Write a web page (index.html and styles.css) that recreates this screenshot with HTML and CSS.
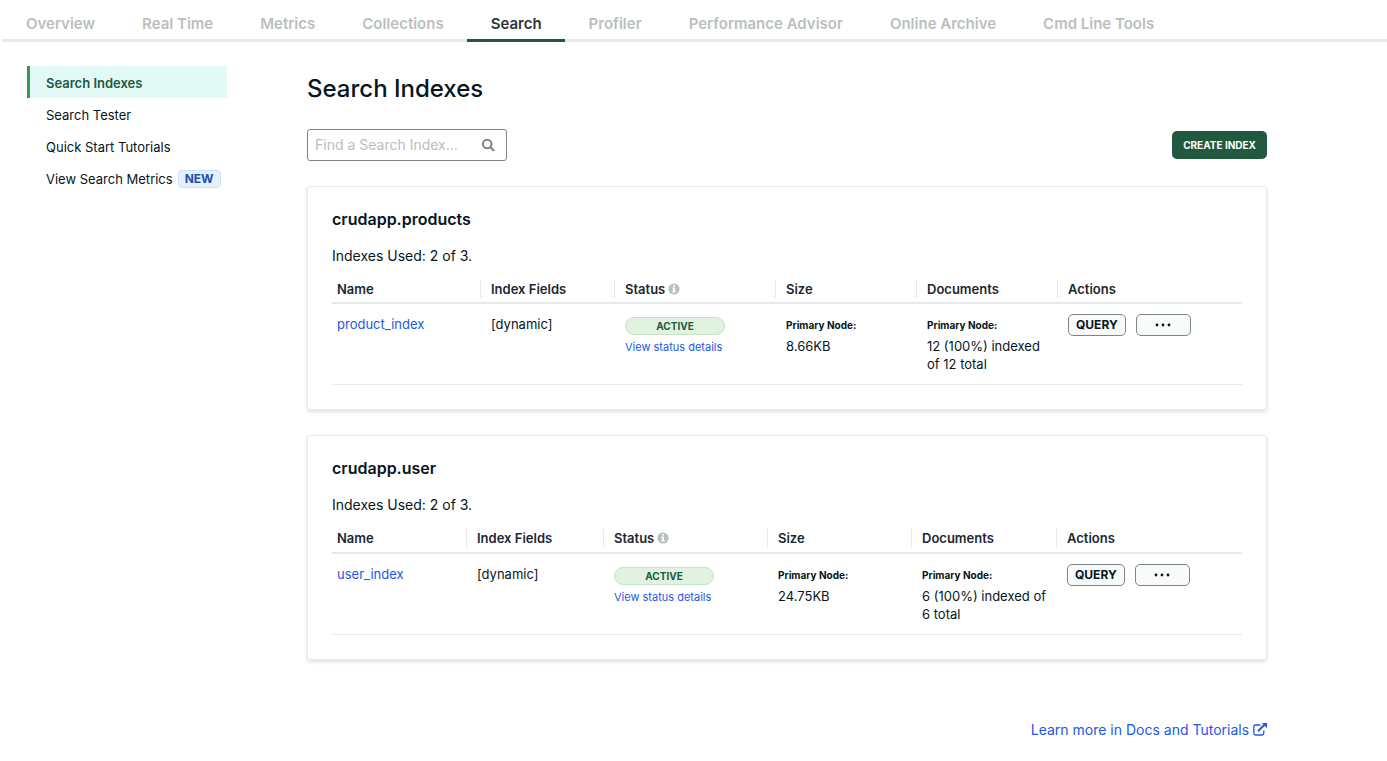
FILE: index.html
```html
<!DOCTYPE html>
<html lang="en">
<head>
<meta charset="utf-8">
<meta name="viewport" content="width=device-width, initial-scale=1">
<title>Search Indexes</title>
<link rel="stylesheet" href="styles.css">
</head>
<body>
<svg class="sprite" aria-hidden="true">
  <symbol id="info" viewBox="0 0 12 12"><circle cx="6" cy="6" r="5.6" fill="#b8c0be"/><path fill="#fff" d="M5 2h2v1.6H5zM4.2 4.6H7v3.6h.9v1.2H4.2V8.2H5V5.8h-.8z"/></symbol>
</svg>
<nav class="tabs" aria-label="Cluster">
  <a class="tab" href="#">Overview</a>
  <a class="tab" href="#">Real Time</a>
  <a class="tab" href="#">Metrics</a>
  <a class="tab" href="#">Collections</a>
  <a class="tab tab-active" href="#" aria-current="page">Search</a>
  <a class="tab" href="#">Profiler</a>
  <a class="tab" href="#">Performance Advisor</a>
  <a class="tab" href="#">Online Archive</a>
  <a class="tab" href="#">Cmd Line Tools</a>
</nav>
<div class="layout">
  <nav class="side" aria-label="Search">
    <a class="side-item side-active" href="#" aria-current="page">Search Indexes</a>
    <a class="side-item" href="#">Search Tester</a>
    <a class="side-item" href="#">Quick Start Tutorials</a>
    <a class="side-item" href="#">View Search Metrics <span class="badge">NEW</span></a>
  </nav>
  <main class="main">
    <h1 class="title">Search Indexes</h1>
    <div class="toolbar">
      <div class="search">
        <input class="search-input" type="text" placeholder="Find a Search Index..." aria-label="Find a Search Index">
        <svg class="search-icon" viewBox="0 0 14 14" aria-hidden="true"><circle cx="6.2" cy="6" r="4.3" fill="none" stroke="#7b868b" stroke-width="2"/><path d="M9.5 9.3l3 3" stroke="#7b868b" stroke-width="2.2" stroke-linecap="round"/></svg>
      </div>
      <button class="create" type="button">CREATE INDEX</button>
    </div>

    <section class="card">
      <h2 class="card-title">crudapp.products</h2>
      <p class="usage">Indexes Used: 2 of 3.</p>
      <table class="table products">
        <colgroup><col class="c-name"><col class="c-fields"><col class="c-status"><col class="c-size"><col class="c-docs"><col></colgroup>
        <thead>
          <tr>
            <th><span class="head">Name</span></th>
            <th><span class="head">Index Fields</span></th>
            <th><span class="head">Status <svg class="info"><use href="#info"/></svg></span></th>
            <th><span class="head">Size</span></th>
            <th><span class="head">Documents</span></th>
            <th><span class="head">Actions</span></th>
          </tr>
        </thead>
        <tbody>
          <tr>
            <td><a class="link" href="#">product_index</a></td>
            <td>[dynamic]</td>
            <td><span class="status">ACTIVE</span><a class="details" href="#">View status details</a></td>
            <td><strong class="node">Primary Node:</strong>8.66KB</td>
            <td><strong class="node">Primary Node:</strong>12 (100%) indexed<br>of 12 total</td>
            <td><div class="actions"><button class="btn" type="button">QUERY</button><button class="btn btn-more" type="button" aria-label="More actions"><svg class="dots" viewBox="0 0 16 4"><circle cx="2" cy="2" r="1.4"/><circle cx="8" cy="2" r="1.4"/><circle cx="14" cy="2" r="1.4"/></svg></button></div></td>
          </tr>
        </tbody>
      </table>
    </section>

    <section class="card">
      <h2 class="card-title">crudapp.user</h2>
      <p class="usage">Indexes Used: 2 of 3.</p>
      <table class="table users">
        <colgroup><col class="c-name"><col class="c-fields"><col class="c-status"><col class="c-size"><col class="c-docs"><col></colgroup>
        <thead>
          <tr>
            <th><span class="head">Name</span></th>
            <th><span class="head">Index Fields</span></th>
            <th><span class="head">Status <svg class="info"><use href="#info"/></svg></span></th>
            <th><span class="head">Size</span></th>
            <th><span class="head">Documents</span></th>
            <th><span class="head">Actions</span></th>
          </tr>
        </thead>
        <tbody>
          <tr>
            <td><a class="link" href="#">user_index</a></td>
            <td>[dynamic]</td>
            <td><span class="status">ACTIVE</span><a class="details" href="#">View status details</a></td>
            <td><strong class="node">Primary Node:</strong>24.75KB</td>
            <td><strong class="node">Primary Node:</strong>6 (100%) indexed of<br>6 total</td>
            <td><div class="actions"><button class="btn" type="button">QUERY</button><button class="btn btn-more" type="button" aria-label="More actions"><svg class="dots" viewBox="0 0 16 4"><circle cx="2" cy="2" r="1.4"/><circle cx="8" cy="2" r="1.4"/><circle cx="14" cy="2" r="1.4"/></svg></button></div></td>
          </tr>
        </tbody>
      </table>
    </section>

    <footer class="footer">
      <a class="docs" href="#">Learn more in Docs and Tutorials
        <svg class="external" viewBox="0 0 14 13" aria-hidden="true"><path d="M7.5 2H2.6Q.8 2 .8 3.8v6.4Q.8 12 2.6 12H9q1.8 0 1.8-1.8V7.6" fill="none" stroke="#2357e6" stroke-width="1.3"/><path d="M5 8.2l6.2-6.2" stroke="#2357e6" stroke-width="2"/><path d="M8.8 0H14v5.2z" fill="#2357e6"/></svg></a>
    </footer>
  </main>
</div>
</body>
</html>
```
FILE: styles.css
```css
* { box-sizing: border-box; }

body {
  margin: 0;
  background: #fff;
  color: #061621;
  font-family: Inter, "Liberation Sans", sans-serif;
  font-size: 13px;
  line-height: 18px;
}

a { text-decoration: none; }
button, input { font-family: inherit; }
.sprite { display: none; }

.tabs {
  display: flex;
  height: 42px;
  margin-left: 2px;
  border-bottom: 3px solid #e7eaea;
}

.tab {
  height: 42px;
  padding: 14px 23px 0 24px;
  border-bottom: 3px solid transparent;
  color: #babfbe;
  font-size: 15px;
  font-weight: 600;
  line-height: 20px;
  white-space: nowrap;
}

.tab-active {
  border-color: #21593f;
  color: #303638;
}

.layout {
  display: grid;
  grid-template-columns: 200px minmax(0, 960px);
  column-gap: 80px;
  padding: 24px 24px 20px 27px;
}

.side-item {
  display: flex;
  align-items: center;
  gap: 5px;
  height: 32px;
  padding: 1px 0 0 16px;
  border-left: 3px solid transparent;
  color: #061621;
  white-space: nowrap;
}

.side-active {
  border-color: #3a9758;
  background: #e3f9f6;
  color: #21593f;
  font-weight: 600;
}

.badge {
  padding: 0 6px;
  border: 1px solid #c3e7fe;
  border-radius: 4px;
  background: #e1f2fd;
  color: #254bae;
  font-size: 12px;
  font-weight: 700;
  line-height: 16px;
}

.title {
  margin: 6px 0 24px;
  font-size: 24px;
  font-weight: 500;
  line-height: 33px;
}

.toolbar {
  display: flex;
  align-items: center;
  justify-content: space-between;
  margin-bottom: 25px;
}

.search {
  display: flex;
  align-items: center;
  width: 200px;
  height: 32px;
  padding: 0 11px 0 7px;
  border: 1px solid #7b868b;
  border-radius: 3px;
}

.search-input {
  flex: 1;
  min-width: 0;
  padding: 0 0 2px;
  border: 0;
  outline: 0;
  background: none;
  font-size: 14px;
}

.search-input::placeholder { color: #b8bfbd; opacity: 1; }
.search-icon { width: 14px; height: 14px; }

.create {
  height: 28px;
  padding: 0 11px 1px;
  border: 0;
  border-radius: 5px;
  background: #21593f;
  color: #fff;
  font-size: 10px;
  font-weight: 700;
}

.card {
  margin-bottom: 25px;
  padding: 24px;
  border: 1px solid #e7eaea;
  border-radius: 3px;
  box-shadow: 0 2px 4px rgba(0, 0, 0, 0.12);
}

.card-title {
  margin: 0 0 20px;
  font-size: 16px;
  font-weight: 600;
  line-height: 16px;
}

.usage {
  margin: 0 0 15px;
  font-size: 14px;
  line-height: 18px;
}

.table {
  width: 100%;
  border-collapse: separate;
  border-spacing: 0;
  border-bottom: 1px solid #e7eaea;
  table-layout: fixed;
}

.products .c-name { width: 148px; }
.products .c-fields { width: 134px; }
.products .c-status { width: 161px; }
.products .c-size { width: 141px; }
.products .c-docs { width: 141px; }
.users .c-name { width: 134px; }
.users .c-fields { width: 137px; }
.users .c-status { width: 164px; }
.users .c-size { width: 144px; }
.users .c-docs { width: 145px; }

th {
  padding: 0 0 4px;
  border-bottom: 2px solid #e7eaea;
  color: #1c2733;
  font-weight: 600;
  text-align: left;
}

.users th { padding-bottom: 5px; }

.head {
  display: block;
  padding-left: 10px;
  border-left: 1px solid #e7eaea;
  white-space: nowrap;
}

th:first-child .head { padding-left: 5px; border-left: 0; }
.info { width: 12px; height: 12px; margin-left: -1px; vertical-align: -1px; }

td {
  height: 80px;
  padding: 11px 0 10px 11px;
  vertical-align: top;
}

td:first-child { padding-left: 5px; }
td:last-child { padding-top: 10px; }
.link, .details, .docs { color: #2357e6; }

.status {
  display: block;
  width: 100px;
  margin: 2px 0 3px;
  border: 1px solid #c3e2c6;
  border-radius: 9px;
  background: #e1f2e1;
  color: #21593f;
  font-size: 10px;
  font-weight: 700;
  line-height: 16px;
  text-align: center;
}

.details { display: block; font-size: 11px; }

.node {
  display: block;
  margin: 1px 0 3px;
  font-size: 10px;
}

.actions { display: flex; gap: 10px; }

.btn {
  height: 22px;
  padding: 0 7px;
  border: 1px solid #7b868b;
  border-radius: 5px;
  background: #f9fbfa;
  color: #061621;
  font-size: 12px;
  font-weight: 700;
  line-height: 20px;
}

.btn-more { width: 55px; padding: 0; }
.dots { display: block; width: 16px; height: 4px; margin: 0 auto; fill: #061621; }

.footer {
  padding-top: 36px;
  font-size: 14px;
  text-align: right;
}

.external { width: 14px; height: 13px; vertical-align: -1px; }
```
